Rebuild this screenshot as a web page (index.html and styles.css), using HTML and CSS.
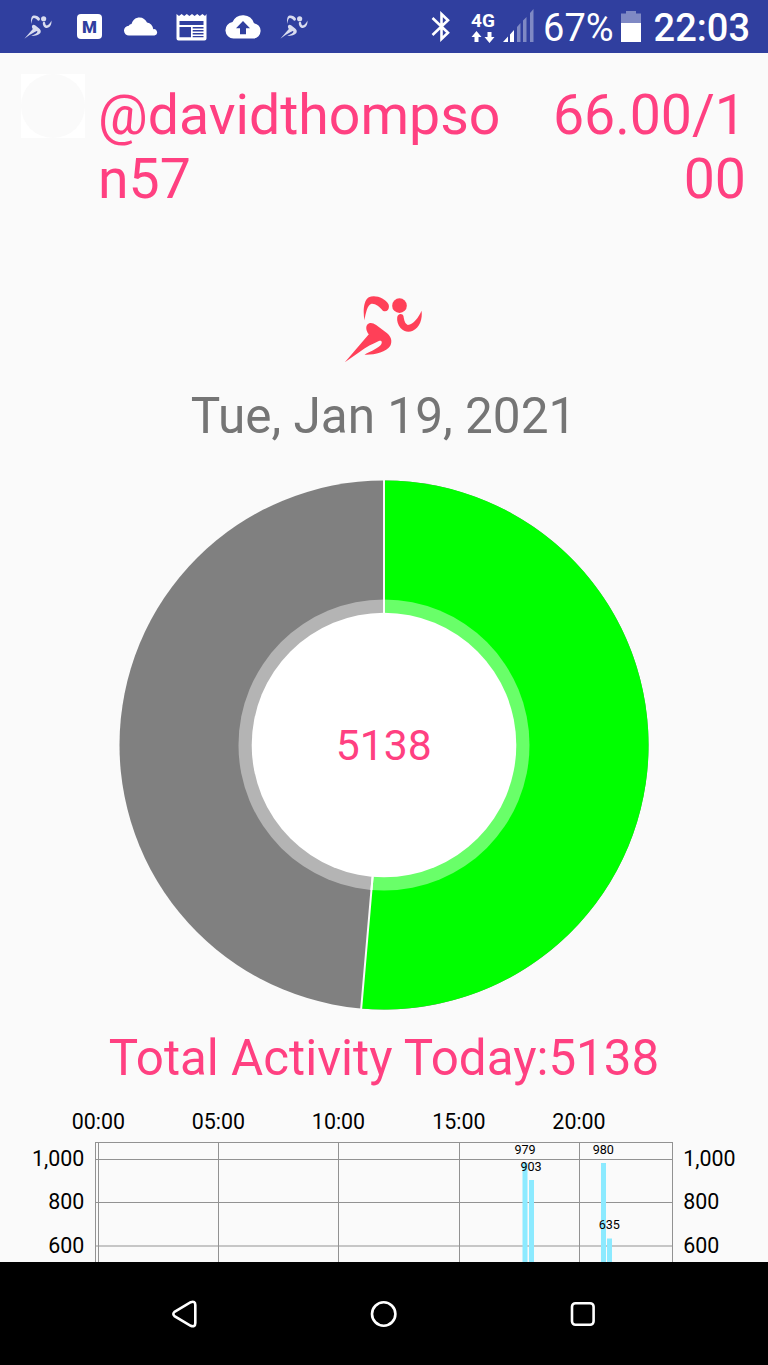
FILE: index.html
```
<!DOCTYPE html>
<html lang="en">
<head>
    <meta charset="UTF-8">
    <meta name="viewport" content="width=device-width, initial-scale=1.0">
    <title>Activity Report</title>
    <link rel="stylesheet" href="styles.css">
</head>
<body>
    <!-- Shared runner shape -->
    <svg class="defs" width="0" height="0">
        <symbol id="runner" viewBox="44 44 236 204">
            <circle cx="210" cy="76" r="22"/>
            <path d="M105 120C100 95 102 60 118 51C137 42 167 54 177 72C182 85 172 98 160 91C150 78 138 69 126 70C114 72 108 100 105 120Z"/>
            <path d="M203 112C204 98 220 98 222 108C224 120 226 130 235 134C252 132 268 110 276 91C280 115 270 142 250 151C238 157 222 154 213 143C205 132 202 122 203 112Z"/>
            <path d="M113 133C120 125 130 127 140 134L172 158C184 168 190 182 182 197C170 215 135 224 105 223C120 214 140 208 153 195C160 186 157 178 148 182C130 190 110 200 90 215L46 246L118 162C110 152 108 140 113 133Z"/>
        </symbol>
    </svg>

    <!-- Status bar -->
    <div class="status-bar">
        <div class="notifications">
            <svg class="small-runner" width="28" height="24"><use href="#runner"/></svg>
            <svg class="icon-m" width="25" height="25" viewBox="0 0 25 25">
                <rect width="25" height="25" rx="4" fill="#fff"/>
                <text x="12.5" y="18.5" class="m-letter">M</text>
            </svg>
            <svg class="icon-cloud" width="34" height="19" viewBox="0 0 34 19">
                <path d="M5 18.500A4.900 4.900 0 0 1 4.800 8.700Q5.500 7.200 7.500 7C9 2.500 12 .5 15.500 .5C19 .5 21.500 2.500 23 5.500Q28.500 6.500 29.300 12.200A3.200 3.200 0 0 1 30.500 18.500Z" fill="#fff"/>
            </svg>
            <svg class="icon-news" width="31" height="28" viewBox="0 0 31 28">
                <path d="M.5 1L3 3L5.600 1L8.200 3L10.800 1L13.400 3L16 1L18.600 3L21.200 1L23.800 3L26.400 1L29 3L30.500 1V25.500Q30.500 27.500 28.500 27.500H2.500Q.5 27.500 .5 25.500Z" fill="#fff"/>
                <path d="M3.500 8H27.500V12H3.500ZM3.500 14H15V24.300H3.500ZM16.700 14H27.500V15.400H16.700ZM16.700 17H27.500V18.400H16.700ZM16.700 20H27.500V21.400H16.700ZM16.700 23H27.500V24.300H16.700Z" fill="#303f9f"/>
            </svg>
            <svg class="icon-upload" width="36" height="25" viewBox="0 0 36 25">
                <path d="M8.500 24.500A8.300 8.300 0 0 1 7.500 8A11.500 11.500 0 0 1 29 9.200A7.700 7.700 0 0 1 28.500 24.500Z" fill="#fff"/>
                <path d="M18 7L25 14.200H21V20.200H15V14.200H11Z" fill="#303f9f"/>
            </svg>
            <svg class="small-runner last-runner" width="28" height="24"><use href="#runner"/></svg>
        </div>
        <div class="system">
            <svg class="icon-bluetooth" width="20" height="31" viewBox="0 0 20 31">
                <path d="M1.500 7L17 21.800L10.500 28V3L17 9.200L1.500 24" fill="none" stroke="#fff" stroke-width="2.600"/>
            </svg>
            <div class="icon-4g">
                <span class="network">4G</span>
                <svg width="24" height="12" viewBox="0 0 24 12">
                    <path d="M5.500 0L10.500 6H7.500V11H3.500V6H.5ZM18.500 12L13.500 6H16.500V1H20.500V6H23.500Z" fill="#fff"/>
                </svg>
            </div>
            <svg class="icon-signal" width="32" height="34" viewBox="0 0 32 34">
                <path d="M0 33L5 27.500V33ZM7 33V25.500L11 21V33Z" fill="#fff"/>
                <path d="M14 33V18L17.500 14V33ZM20 33V11.500L23.500 8V33ZM27 33V4L30.500 0V33Z" fill="#7f89c4"/>
            </svg>
            <span class="battery-level">67%</span>
            <svg class="icon-battery" width="20" height="32" viewBox="0 0 20 32">
                <path d="M5 1H15V3.500H20V13H0V3.500H5Z" fill="#7f89c4"/>
                <rect y="13" width="20" height="19" fill="#fff"/>
            </svg>
            <span class="clock">22:03</span>
        </div>
    </div>

    <!-- Account header -->
    <div class="header">
        <div class="avatar"><div class="avatar-circle"></div></div>
        <div class="username">@davidthompson57</div>
        <div class="score">66.00/100</div>
    </div>

    <!-- Daily report -->
    <div class="report">
        <svg class="logo" width="79" height="68"><use href="#runner"/></svg>
        <div class="date">Tue, Jan 19, 2021</div>
        <svg class="pie" width="530" height="530" viewBox="-265 -265 530 530">
            <circle r="264.500" fill="#808080"/>
            <path d="M0 0V-264.500A264.500 264.500 0 1 1 -22.900 263.500Z" fill="#00ff00"/>
            <path d="M0 -265V0L-22.900 264.500" fill="none" stroke="#fafafa" stroke-width="2"/>
            <circle r="145.500" fill="#fff" fill-opacity=".41"/>
            <circle r="132.300" fill="#fff"/>
            <path d="M0 -145V-132M-12.500 145L-11.400 132" fill="none" stroke="#fff" stroke-width="2"/>
            <text x="-.3" y="15" class="pie-label">5138</text>
        </svg>
        <div class="total">Total Activity Today:5138</div>
    </div>

    <!-- Hourly chart -->
    <svg class="chart" width="768" height="175" viewBox="0 0 768 175">
        <g class="grid">
            <path d="M95.500 55.500H672.500M95.500 72.500H672.500M95.500 115.500H672.500M95.500 159H672.500"/>
            <path d="M95.500 55V175M98.500 55V175M218.500 55V175M338.500 55V175M459.500 55V175M579.500 55V175M672.500 55V175"/>
        </g>
        <g class="bars">
            <rect x="522.500" y="76" width="5" height="99"/>
            <rect x="529" y="93" width="5" height="82"/>
            <rect x="601" y="76" width="5" height="99"/>
            <rect x="607" y="151.500" width="5" height="23.500"/>
        </g>
        <g class="hours">
            <text x="98.300" y="41.500">00:00</text>
            <text x="218.300" y="41.500">05:00</text>
            <text x="338.500" y="41.500">10:00</text>
            <text x="458.800" y="41.500">15:00</text>
            <text x="579" y="41.500">20:00</text>
        </g>
        <g class="left-axis">
            <text x="84.300" y="78.500">1,000</text>
            <text x="84.300" y="122">800</text>
            <text x="84.300" y="165.500">600</text>
        </g>
        <g class="right-axis">
            <text x="683.300" y="78.500">1,000</text>
            <text x="683.300" y="122">800</text>
            <text x="683.300" y="165.500">600</text>
        </g>
        <g class="values">
            <text x="525" y="67">979</text>
            <text x="531" y="83.500">903</text>
            <text x="603.300" y="67">980</text>
            <text x="609.300" y="142">635</text>
        </g>
    </svg>

    <!-- Navigation bar -->
    <div class="nav-bar">
        <svg width="28" height="28" viewBox="0 0 28 28">
            <path d="M3.500 11.900L19.700 2.200Q24.300 .5 24.300 5V23Q24.300 27.500 19.700 25.800L3.500 16.100Q1.200 14 3.500 11.900Z"/>
        </svg>
        <svg width="28" height="28" viewBox="0 0 28 28"><circle cx="13.700" cy="14" r="11.700"/></svg>
        <svg width="28" height="28" viewBox="0 0 28 28"><rect x="3" y="3.200" width="21.600" height="21.600" rx="3.500"/></svg>
    </div>
</body>
</html>
```

FILE: styles.css
```
body {
    display: flex;
    flex-direction: column;
    width: 768px;
    height: 1365px;
    margin: 0;
    overflow: hidden;
    background: #fafafa;
    font-family: Roboto, sans-serif;
}

svg {
    display: block;
    flex-shrink: 0;
}

.defs {
    display: none;
}

.status-bar {
    display: flex;
    justify-content: space-between;
    height: 53px;
    flex-shrink: 0;
    background: #303f9f;
    color: white;
}

.notifications, .system {
    display: flex;
    align-items: center;
}

.notifications {
    padding-left: 24px;
}

.system {
    padding-right: 18px;
}

.small-runner {
    fill: #d9dcef;
}

.icon-m {
    margin-left: 25px;
}

.m-letter {
    font-size: 17px;
    font-weight: 900;
    text-anchor: middle;
    fill: #303f9f;
}

.icon-cloud {
    margin-left: 22px;
}

.icon-news {
    margin-left: 18px;
}

.icon-upload {
    margin-left: 18px;
}

.last-runner {
    margin-left: 19px;
}

.icon-4g {
    display: flex;
    flex-direction: column;
    gap: 1px;
    width: 24px;
    margin-left: 20px;
}

.network {
    font-size: 19px;
    font-weight: bold;
    line-height: 19px;
}

.icon-signal {
    margin-left: 8px;
    margin-bottom: 2px;
}

.battery-level {
    margin-left: 8px;
    font-size: 38px;
    line-height: 44px;
    padding-top: 2px;
}

.icon-battery {
    margin: 0 13px 1px 7px;
}

.clock {
    font-size: 38px;
    font-weight: 500;
    line-height: 44px;
    padding-top: 2px;
}

.header {
    display: flex;
    height: 159px;
    flex-shrink: 0;
    color: #ff4081;
    font-size: 55.4px;
    line-height: 64px;
}

.avatar {
    width: 64px;
    height: 64px;
    margin: 21px 13px 0 21px;
    background: white;
}

.avatar-circle {
    width: 64px;
    height: 64px;
    border-radius: 50%;
    background: #fafafa;
}

.username {
    width: 410px;
    padding-top: 31px;
    word-break: break-all;
}

.score {
    width: 200px;
    margin-left: 38px;
    padding-top: 31px;
    text-align: right;
    word-break: break-all;
}

.report {
    display: flex;
    flex-direction: column;
    align-items: center;
    height: 875px;
    flex-shrink: 0;
}

.logo {
    margin: 83px 1px 0 0;
    fill: #ff4058;
}

.date {
    margin: 24px 1px 0 0;
    font-size: 49.5px;
    line-height: 59px;
    color: #757575;
}

.pie {
    margin-top: 34px;
}

.pie-label {
    font-size: 42.7px;
    text-anchor: middle;
    fill: #ff4081;
}

.total {
    margin-top: 19px;
    font-size: 49.3px;
    line-height: 59px;
    color: #ff4081;
}

.grid {
    fill: none;
    stroke: #929292;
    stroke-width: 1;
}

.bars {
    fill: #8ceaff;
}

.hours, .left-axis, .right-axis {
    font-size: 21.4px;
}

.hours, .values {
    text-anchor: middle;
}

.left-axis {
    text-anchor: end;
}

.values {
    font-size: 12.6px;
}

.nav-bar {
    display: flex;
    justify-content: center;
    align-items: center;
    gap: 171px;
    flex: 1;
    background: black;
}

.nav-bar svg {
    fill: none;
    stroke: white;
    stroke-width: 2.6;
}
```
